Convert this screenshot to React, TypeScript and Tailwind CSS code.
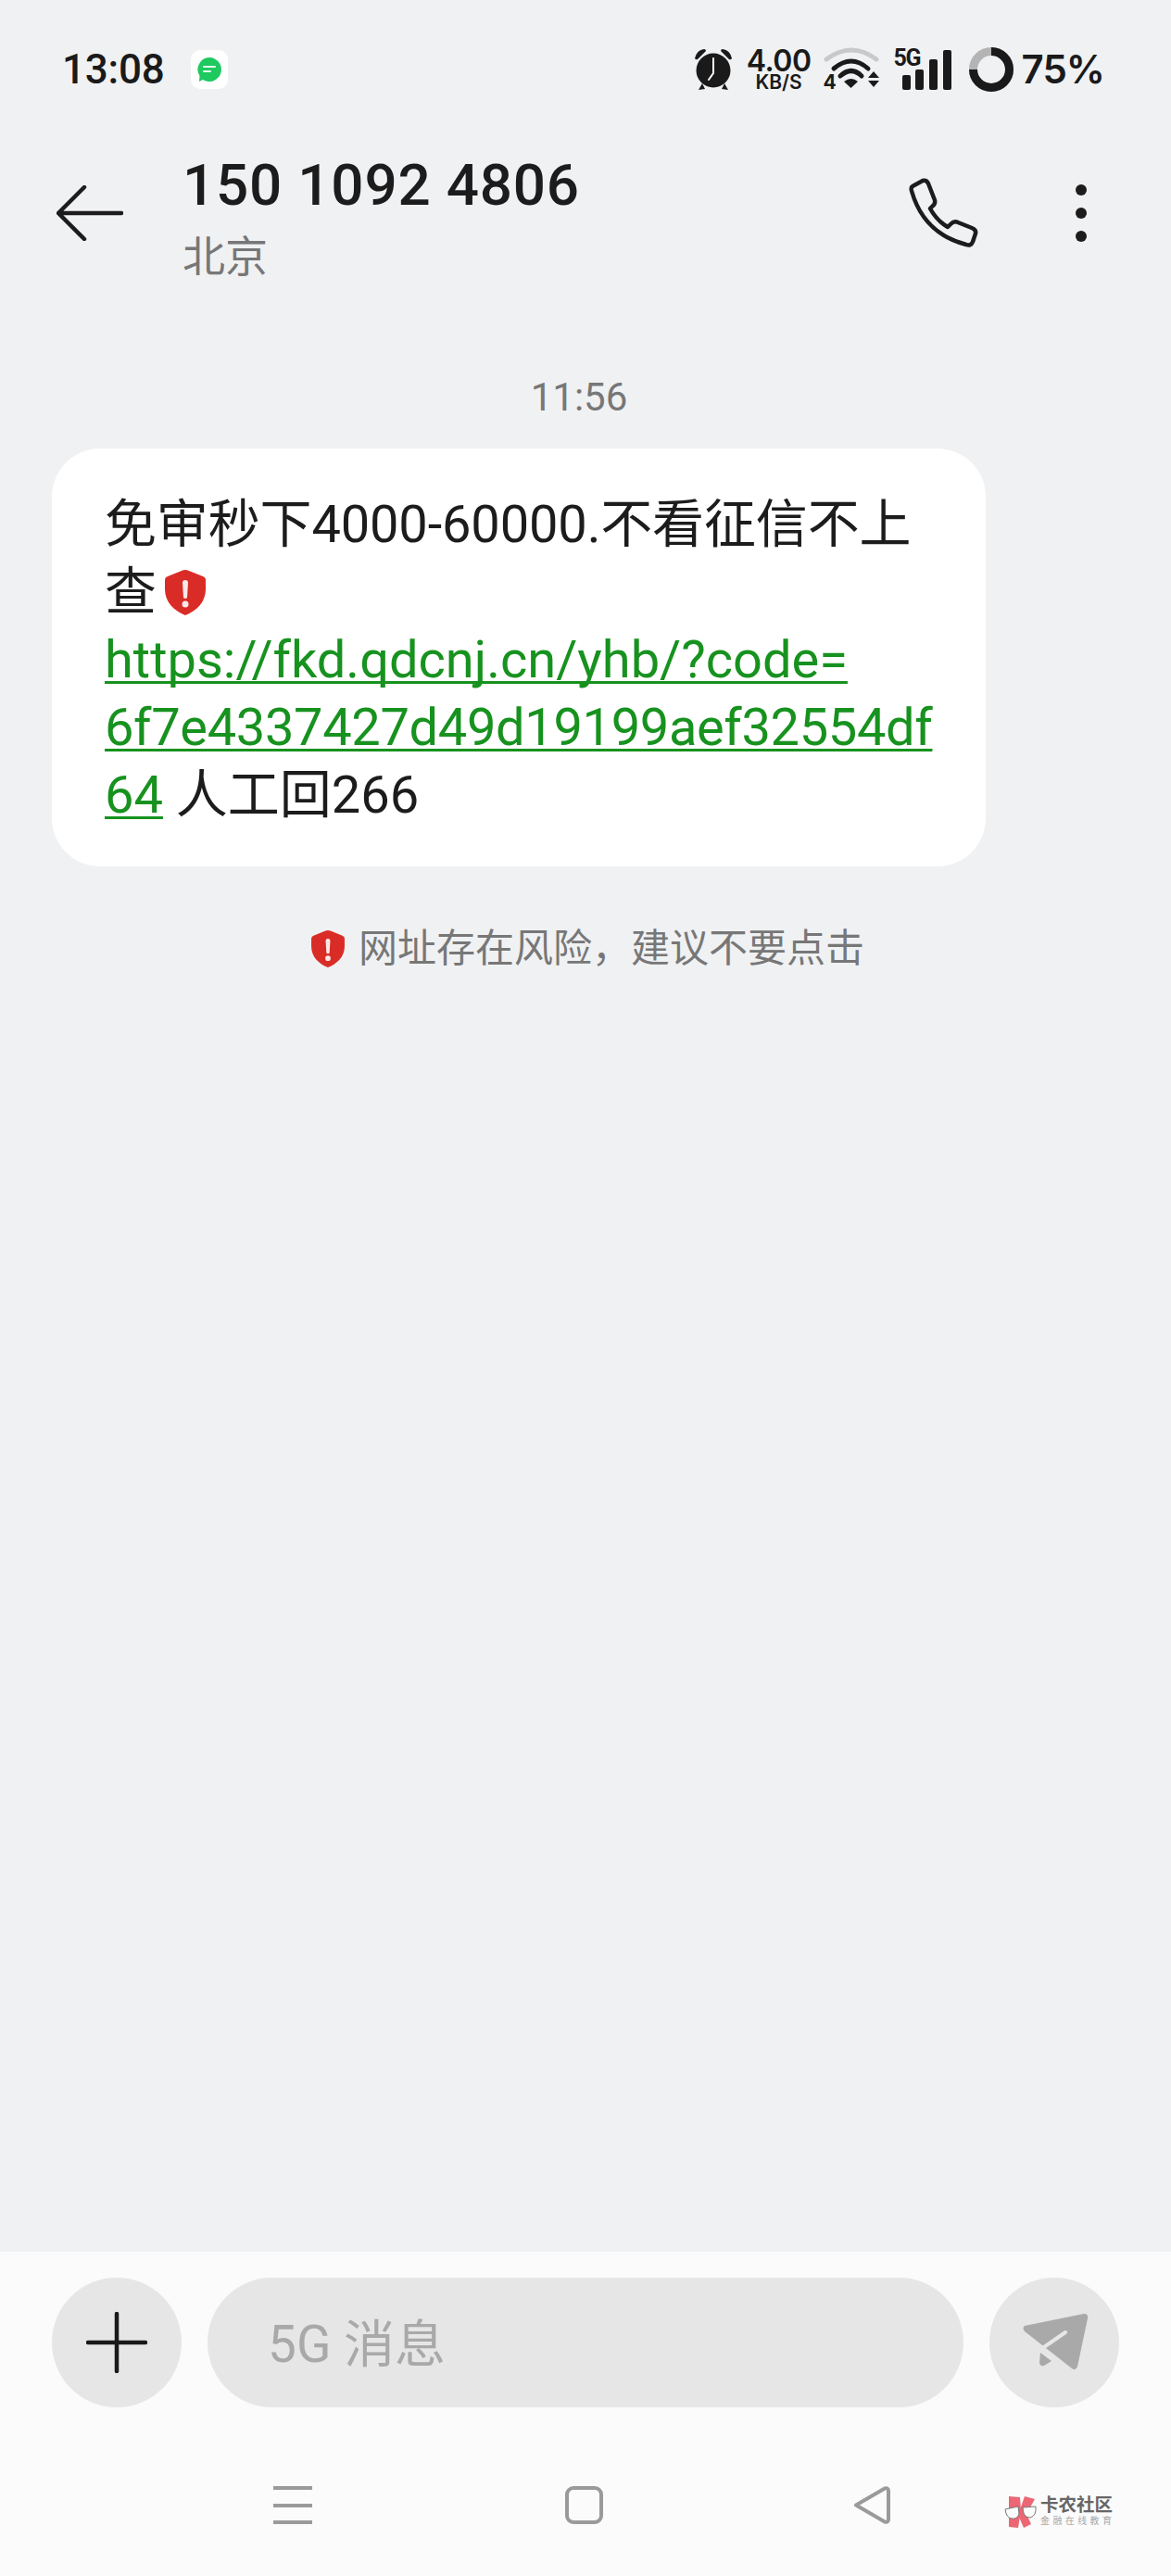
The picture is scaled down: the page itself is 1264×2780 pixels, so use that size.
const sans = "font-['Roboto','Noto_Sans_CJK_SC',sans-serif]";

function Shield({ className }: { className: string }) {
  return (
    <svg viewBox="0 0 44 49" className={className}>
      <path d="M22 0 Q24 0 26 1 L41 7 Q44 8 44 11 V21 C44 35 34 44 22 49 C10 44 0 35 0 21 V11 Q0 8 3 7 L18 1 Q20 0 22 0Z" fill="#da2c26" />
      <path d="M19 14 Q19 11 22 11 Q25 11 25 14 L24 30 Q22 32 20 30 Z" fill="#fbe9e7" />
      <circle cx="22" cy="37" r="3.5" fill="#fbe9e7" />
    </svg>
  );
}

function StatusIcons() {
  return (
    <div className="flex items-center text-[#1a1a1a]">
      <svg viewBox="0 0 44 46" className="w-[44px] h-[46px]">
        <circle cx="22" cy="24" r="18.5" fill="#1a1a1a" />
        <path d="M2 11 Q4 2 12 1 Q14 1 14 3 L5 12 Q3 13 2 11Z M42 11 Q40 2 32 1 Q30 1 30 3 L39 12 Q41 13 42 11Z" fill="#1a1a1a" />
        <path d="M10 38 L6 45 L13 44 Z M34 38 L38 45 L31 44 Z" fill="#1a1a1a" />
        <path d="M22 11 V27 L17 34" fill="none" stroke="#fff" strokeWidth="2" strokeLinecap="round" />
      </svg>
      <div className="ml-[13px] w-[72px] flex flex-col items-center font-['Inter',sans-serif] font-semibold">
        <span className="text-[32px] leading-[27px] tracking-[-0.5px]">4.00</span>
        <span className="text-[21px] leading-[19px]">KB/S</span>
      </div>
      <div className="relative ml-[12px] w-[62px] h-[48px]">
        <svg viewBox="0 0 62 48" className="w-[62px] h-[48px]">
          <path d="M3 13 Q30 -7 57 13" fill="none" stroke="#c9c9c9" strokeWidth="5" strokeLinecap="round" />
          <path d="M11 23 Q30 7 48 23" fill="none" stroke="#1a1a1a" strokeWidth="5" strokeLinecap="round" />
          <path d="M18 31 Q30 20 41 31" fill="none" stroke="#1a1a1a" strokeWidth="5" strokeLinecap="round" />
          <path d="M22 37 Q30 31 37 37 L29.5 44 Z" fill="#1a1a1a" />
          <path d="M54 26 L60 33 H48 Z M48 36 H60 L54 43 Z" fill="#1a1a1a" />
        </svg>
        <span className="absolute left-0 top-[26px] font-['Inter',sans-serif] font-bold text-[21px] leading-[24px]">4</span>
      </div>
      <div className="relative ml-[14px] w-[62px] h-[44px]">
        <svg viewBox="0 0 62 44" className="w-[62px] h-[44px]">
          <rect x="9" y="28" width="9" height="16" rx="2" fill="#1a1a1a" />
          <rect x="23" y="22" width="9" height="22" rx="2" fill="#1a1a1a" />
          <rect x="38" y="11" width="9" height="33" rx="2" fill="#1a1a1a" />
          <rect x="53" y="1" width="9" height="43" rx="2" fill="#1a1a1a" />
        </svg>
        <span className="absolute left-0 top-[-3px] font-['Roboto',sans-serif] font-bold text-[25px] leading-[26px] tracking-[-1.5px]">5G</span>
      </div>
      <svg viewBox="0 0 48 48" className="ml-[19px] w-[48px] h-[48px]">
        <circle cx="24" cy="24" r="19.5" fill="none" stroke="#b4b4b4" strokeWidth="9" />
        <path d="M24 4.5 A19.5 19.5 0 1 1 4.5 24" fill="none" stroke="#1a1a1a" strokeWidth="9" />
      </svg>
      <span className="ml-[9px] font-['Inter',sans-serif] font-semibold text-[42px] leading-[48px] tracking-[-1px]">75%</span>
    </div>
  );
}

function BackIcon() {
  return (
    <svg viewBox="0 0 72 60" className="w-[72px] h-[60px]">
      <path d="M70 30 H3 M30 2 L2 30 L30 58" fill="none" stroke="#1c1c1c" strokeWidth="4.5" strokeLinecap="round" strokeLinejoin="round" />
    </svg>
  );
}

function PhoneIcon() {
  return (
    <svg viewBox="0 0 76 76" className="w-[76px] h-[76px]">
      <path
        d="M4 9 L15 3 Q19 2 21 6 L28 24 Q29 28 25 31 L23 33 Q30 46 42 53 L45 50 Q49 46 53 48 L68 54 Q73 56 72 60 L69 69 Q67 74 62 72 Q16 60 3 14 Q2 10 4 9Z"
        fill="none"
        stroke="#1c1c1c"
        strokeWidth="4.5"
        strokeLinejoin="round"
      />
    </svg>
  );
}

function SendIcon() {
  return (
    <svg viewBox="0 0 72 62" className="ml-[3px] w-[72px] h-[62px]">
      <path d="M2 13 L66 0 Q71 0 70 5 L59 57 Q57 62 53 59 L2 19 Q-1 15 2 13Z" fill="#a9a9a9" />
      <path d="M46 20 L20 38 L34 50" fill="none" stroke="#e6e6e6" strokeWidth="4" strokeLinecap="round" />
      <path d="M19 42 L18 53 Q19 57 23 56 L31 51 Z" fill="#a9a9a9" />
    </svg>
  );
}

function Logo() {
  return (
    <div className="flex items-start">
      <svg viewBox="0 0 36 36" className="w-[36px] h-[36px]">
        <path d="M5 1 L17 2 L18 16 L15 35 L5 34 Z" fill="#ec6674" />
        <path d="M22 1 L33 4 L24 20 L29 31 L21 35 L15 21 Z" fill="#ec6674" />
        <path d="M1 15 L15 12 L16 20 Q14 26 8 25 Q2 24 1 15Z" fill="#fbfbfb" stroke="#777" strokeWidth="1" />
        <path d="M20 13 L34 12 Q35 22 28 24 Q20 24 20 13Z" fill="#fbfbfb" stroke="#777" strokeWidth="1" />
      </svg>
      <div className={`ml-[3px] mt-[1px] flex flex-col ${sans}`}>
        <span className="text-[19.5px] leading-[20px] font-bold text-[#666]">卡农社区</span>
        <span className="mt-[1px] text-[10px] leading-[12px] tracking-[3.4px] text-[#a8a8a8] whitespace-nowrap">金融在线教育</span>
      </div>
    </div>
  );
}

export default function App() {
  return (
    <div className={`w-[1264px] h-[2780px] flex flex-col bg-[#f0f1f3] ${sans}`}>
      {/* status bar */}
      <div className="h-[150px] pl-[67px] pr-[72px] flex items-center justify-between">
        <div className="flex items-center">
          <span className="text-[44px] leading-[50px] font-medium text-[#1a1a1a] tracking-[-0.2px]">13:08</span>
          <div className="ml-[28px] w-[40px] h-[42px] rounded-[10px] bg-white flex items-center justify-center">
            <svg viewBox="0 0 28 28" className="w-[28px] h-[28px]">
              <path d="M14 1 A13 13 0 1 1 7 25 L3 27 L3.5 21 A13 13 0 0 1 14 1Z" fill="#1ec95f" />
              <rect x="7" y="10" width="14" height="2" rx="1" fill="#e8fff0" />
              <rect x="7" y="15" width="9" height="2" rx="1" fill="#e8fff0" />
            </svg>
          </div>
        </div>
        <StatusIcons />
      </div>

      {/* header */}
      <div className="h-[160px] flex items-center pl-[61px] pr-[91px]">
        <BackIcon />
        <div className="ml-[64px] mt-[12px] flex-1 flex flex-col">
          <div className="text-[62px] leading-[72px] font-medium tracking-[0.8px] text-[#1c1c1c]">150 1092 4806</div>
          <div className="mt-[10px] text-[46px] leading-[62px] text-[#777]">北京</div>
        </div>
        <PhoneIcon />
        <div className="ml-[104px] flex flex-col gap-[13px]">
          <div className="w-[12px] h-[12px] rounded-full bg-[#1c1c1c]" />
          <div className="w-[12px] h-[12px] rounded-full bg-[#1c1c1c]" />
          <div className="w-[12px] h-[12px] rounded-full bg-[#1c1c1c]" />
        </div>
      </div>

      {/* conversation */}
      <div className="flex-1 flex flex-col">
        <div className="mt-[94px] h-[50px] pr-[14px] text-center text-[42px] leading-[50px] text-[#777]">11:56</div>
        <div className="mt-[30px] ml-[56px] w-[1008px] rounded-[52px] bg-white pl-[57px] pt-[46px] pb-[40px] text-[56px] leading-[73px] text-[#1c1c1c]">
          <div className="tracking-[-0.15px]">免审秒下4000-60000.不看征信不上</div>
          <div className="flex items-center">
            查<Shield className="ml-[9px] w-[44px] h-[49px]" />
          </div>
          <div className="underline decoration-[3px] underline-offset-[4px] [text-decoration-skip-ink:none] text-[#17921f]">https://fkd.qdcnj.cn/yhb/?code=</div>
          <div className="underline decoration-[3px] underline-offset-[4px] [text-decoration-skip-ink:none] text-[#17921f] tracking-[-0.35px] whitespace-nowrap">6f7e4337427d49d19199aef32554df</div>
          <div>
            <span className="underline decoration-[3px] underline-offset-[4px] [text-decoration-skip-ink:none] text-[#17921f]">64</span> 人工回266
          </div>
        </div>
        <div className="mt-[64px] pl-[5px] flex items-center justify-center">
          <Shield className="w-[36px] h-[40px]" />
          <span className="ml-[15px] text-[42px] leading-[50px] text-[#777]">网址存在风险，建议不要点击</span>
        </div>
      </div>

      {/* composer + nav */}
      <div className="h-[350px] bg-[#fbfbfb]">
        <div className="pt-[28px] px-[56px] flex gap-[28px]">
          <div className="w-[140px] h-[140px] rounded-full bg-[#e6e6e6] flex items-center justify-center">
            <svg viewBox="0 0 66 66" className="w-[66px] h-[66px]">
              <path d="M33 2 V64 M2 33 H64" stroke="#1a1a1a" strokeWidth="4.5" strokeLinecap="round" />
            </svg>
          </div>
          <div className="flex-1 h-[140px] rounded-full bg-[#e6e6e6] flex items-center pl-[65px] pt-[5px] text-[55px] text-[#a9a9a9]">
            5G 消息
          </div>
          <div className="w-[140px] h-[140px] rounded-full bg-[#e6e6e6] flex items-center justify-center">
            <SendIcon />
          </div>
        </div>
        <div className="mt-[85px] pl-[295px] flex items-start">
          <div className="w-[42px] h-[41px] flex flex-col justify-between">
            <div className="h-[4px] bg-[#9a9a9a]" />
            <div className="h-[4px] bg-[#9a9a9a]" />
            <div className="h-[4px] bg-[#9a9a9a]" />
          </div>
          <div className="ml-[273px] w-[41px] h-[41px] rounded-[9px] border-[4px] border-[#9a9a9a]" />
          <svg viewBox="0 0 40 41" className="ml-[270px] w-[40px] h-[41px]">
            <path d="M3 20.5 L34 2.5 Q38 1.5 38 5 V36 Q38 39.5 34 38.5 L3 20.5Z" fill="none" stroke="#9a9a9a" strokeWidth="4" strokeLinejoin="round" />
          </svg>
          <div className="ml-[123px] mt-[10px]">
            <Logo />
          </div>
        </div>
      </div>
    </div>
  );
}
